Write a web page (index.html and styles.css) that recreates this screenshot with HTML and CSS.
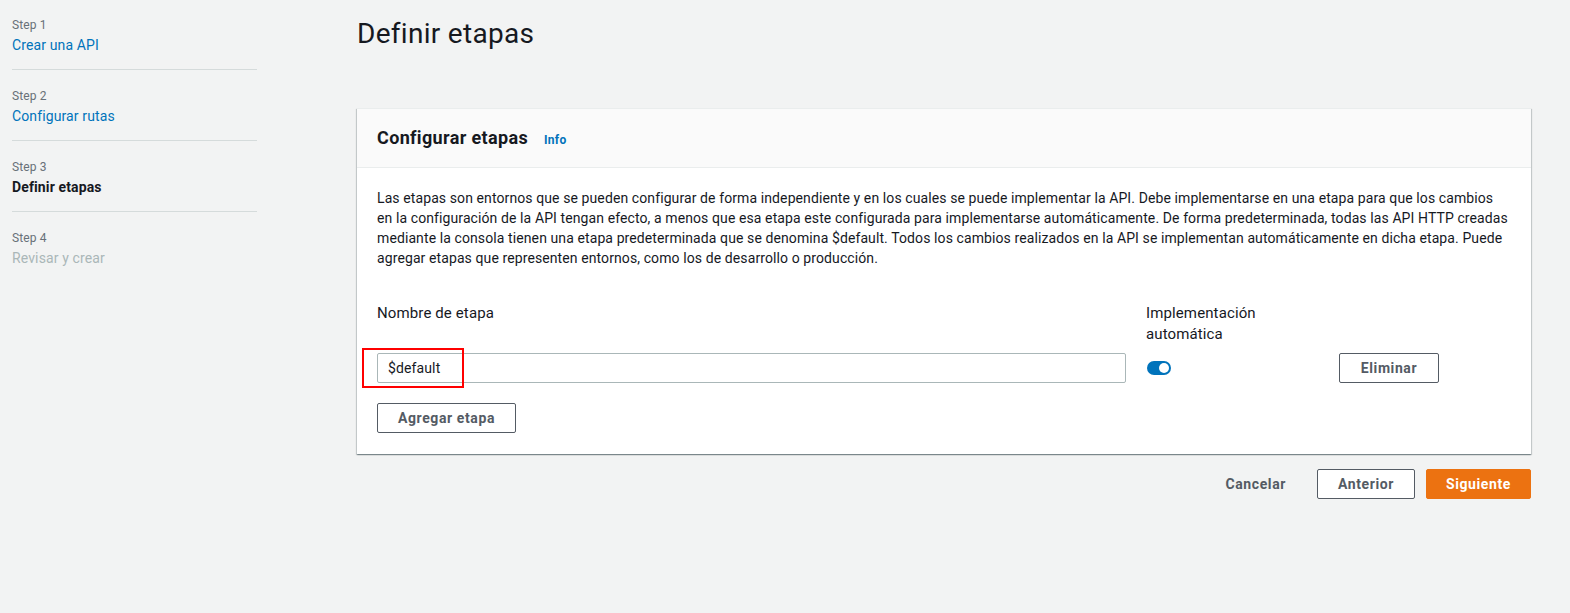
FILE: index.html
```html
<!DOCTYPE html>
<html lang="es">
<head>
<meta charset="utf-8">
<title>Definir etapas</title>
<link rel="stylesheet" href="styles.css">
</head>
<body>
<div class="layout">
  <nav class="steps">
    <ol class="step-list">
      <li class="step">
        <div class="step-num">Step 1</div>
        <a class="step-link" href="#">Crear una API</a>
      </li>
      <li class="step">
        <div class="step-num">Step 2</div>
        <a class="step-link" href="#">Configurar rutas</a>
      </li>
      <li class="step">
        <div class="step-num">Step 3</div>
        <div class="step-current">Definir etapas</div>
      </li>
      <li class="step step-last">
        <div class="step-num">Step 4</div>
        <div class="step-disabled">Revisar y crear</div>
      </li>
    </ol>
  </nav>
  <main class="main">
    <h1 class="page-title">Definir etapas</h1>
    <section class="card">
      <header class="card-header">
        <h2 class="card-title">Configurar etapas</h2>
        <a class="info" href="#">Info</a>
      </header>
      <div class="card-body">
        <p class="desc">Las etapas son entornos que se pueden configurar de forma independiente y en los cuales se puede implementar la API. Debe implementarse en una etapa para que los cambios<br>en la configuración de la API tengan efecto, a menos que esa etapa este configurada para implementarse automáticamente. De forma predeterminada, todas las API HTTP creadas<br>mediante la consola tienen una etapa predeterminada que se denomina $default. Todos los cambios realizados en la API se implementan automáticamente en dicha etapa. Puede<br>agregar etapas que representen entornos, como los de desarrollo o producción.</p>
        <div class="stage-grid">
          <div class="field-label">Nombre de etapa</div>
          <div class="field-label">Implementación<br>automática</div>
          <div></div>
          <div class="input-wrap">
            <div class="input">$default</div>
            <div class="highlight"></div>
          </div>
          <div class="toggle-cell"><span class="toggle"><span class="knob"></span></span></div>
          <div><button class="btn btn-remove">Eliminar</button></div>
        </div>
        <button class="btn btn-add">Agregar etapa</button>
      </div>
    </section>
    <div class="actions">
      <button class="btn-link">Cancelar</button>
      <button class="btn btn-prev">Anterior</button>
      <button class="btn btn-primary">Siguiente</button>
    </div>
  </main>
</div>
</body>
</html>
```

FILE: styles.css
```css
* { box-sizing: border-box; }
html, body {
  margin: 0;
  padding: 0;
  background: #f2f3f3;
  font-family: Roboto, "Liberation Sans", Arial, sans-serif;
  color: #16191f;
  font-size: 14px;
  line-height: 20px;
  letter-spacing: .12px;
}
.layout {
  display: flex;
  align-items: flex-start;
}
.steps {
  width: 257px;
  padding-left: 12px;
  flex: none;
}
.step-list {
  list-style: none;
  margin: 0;
  padding: 0;
}
.step {
  padding: 18px 0 14px;
  border-bottom: 1px solid #d5dbdb;
}
.step:first-child { padding-top: 17px; }
.step-last { border-bottom: none; }
.step-num {
  font-size: 12px;
  line-height: 16px;
  color: #687078;
  margin-bottom: 2px;
}
.step-link {
  display: block;
  color: #0073bb;
  text-decoration: none;
}
.step-current { font-weight: 700; }
.step-disabled { color: #aab7b8; }

.main {
  margin-left: 100px;
  width: 1174px;
  flex: none;
}
.page-title {
  margin: 0;
  padding-top: 16px;
  font-size: 28px;
  line-height: 36px;
  font-weight: 400;
  letter-spacing: .3px;
  height: 108px;
}
.card {
  background: #fff;
  box-shadow: 0 1px 1px 0 rgba(0,28,36,.3), 1px 1px 1px 0 rgba(0,28,36,.15), -1px 1px 1px 0 rgba(0,28,36,.15);
  border-top: 1px solid #eaeded;
}
.card-header {
  background: #fafafa;
  border-bottom: 1px solid #eaeded;
  height: 59px;
  padding: 0 20px;
  display: flex;
  align-items: center;
  gap: 16px;
}
.card-title {
  margin: 0;
  font-size: 18px;
  line-height: 22px;
  font-weight: 700;
  letter-spacing: .35px;
}
.info {
  font-size: 12px;
  font-weight: 700;
  color: #0073bb;
  text-decoration: none;
  padding-top: 3px;
  letter-spacing: .3px;
}
.card-body {
  padding: 20px 20px 21px;
}
.desc {
  margin: 0 0 35px;
  white-space: nowrap;
  letter-spacing: .1px;
}
.stage-grid {
  display: grid;
  grid-template-columns: 749px 172px 100px;
  column-gap: 20px;
  row-gap: 8px;
  align-items: start;
}
.field-label {
  font-size: 15px;
  line-height: 21px;
}
.input-wrap { position: relative; }
.input {
  height: 30px;
  border: 1px solid #aab7b8;
  border-radius: 2px;
  padding: 4px 10px;
  line-height: 20px;
}
.highlight {
  position: absolute;
  left: -15px;
  top: -5px;
  width: 102px;
  height: 40px;
  border: 2px solid #ff0000;
  pointer-events: none;
}
.toggle-cell {
  height: 30px;
  display: flex;
  align-items: center;
  padding-left: 1px;
}
.toggle {
  display: block;
  width: 24px;
  height: 14px;
  border-radius: 7px;
  background: #0073bb;
  position: relative;
}
.knob {
  position: absolute;
  right: 2px;
  top: 2px;
  width: 10px;
  height: 10px;
  border-radius: 50%;
  background: #fff;
}
.btn {
  font-family: inherit;
  font-size: 14px;
  font-weight: 700;
  line-height: 20px;
  color: #545b64;
  background: #fff;
  border: 1px solid #545b64;
  border-radius: 2px;
  padding: 4px 20px;
  cursor: pointer;
  letter-spacing: .6px;
}
.btn-remove { width: 100px; padding: 4px 0; margin-left: 1px; }
.btn-add { margin-top: 20px; }
.actions {
  display: flex;
  justify-content: flex-end;
  align-items: center;
  margin-top: 15px;
  gap: 11px;
}
.btn-link {
  font-family: inherit;
  font-size: 14px;
  font-weight: 700;
  line-height: 20px;
  color: #545b64;
  background: none;
  border: none;
  padding: 5px 20px;
  letter-spacing: .6px;
}
.btn-prev { width: 98px; padding: 4px 0; }
.btn-primary {
  background: #ec7211;
  border-color: #ec7211;
  color: #fff;
  width: 105px;
  padding: 4px 0;
}
```
